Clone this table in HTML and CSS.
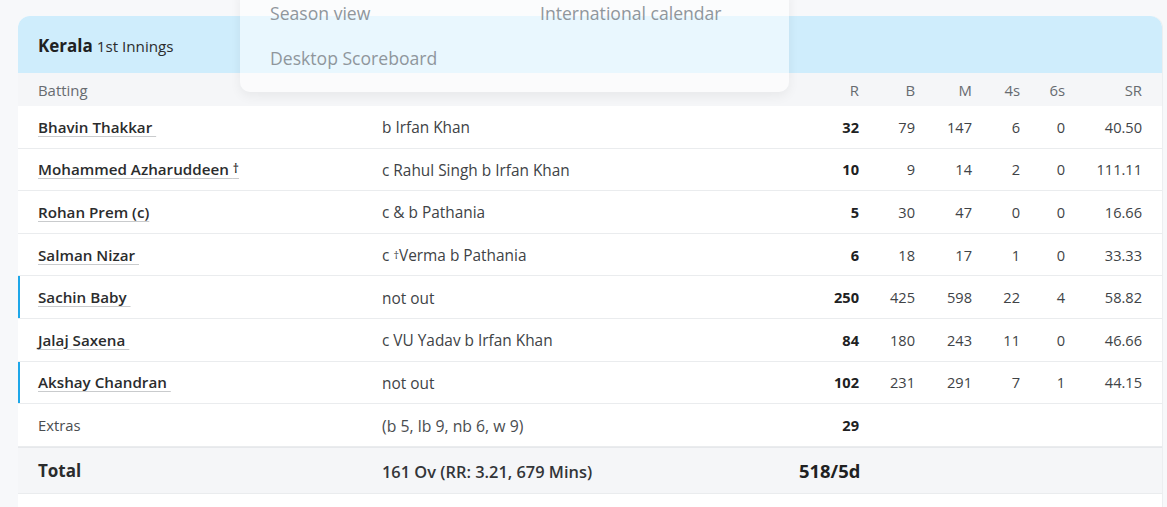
FILE: index.html
```html
<!DOCTYPE html>
<html>
<head>
<meta charset="utf-8">
<link rel="stylesheet" href="styles.css">
</head>
<body>
<div class="page">
  <div class="card">
    <div class="card-head"><span class="team">Kerala</span> <span class="inn">1st Innings</span></div>
    <div class="row head-row">
      <div class="c-name">Batting</div>
      <div class="c-dis"></div>
      <div class="num">R</div>
      <div class="num">B</div>
      <div class="num">M</div>
      <div class="num">4s</div>
      <div class="num">6s</div>
      <div class="num">SR</div>
    </div>
    <div class="row">
      <div class="c-name"><a class="player">Bhavin Thakkar&nbsp;</a></div>
      <div class="c-dis">b Irfan Khan</div>
      <div class="num bold">32</div><div class="num">79</div><div class="num">147</div><div class="num">6</div><div class="num">0</div><div class="num">40.50</div>
    </div>
    <div class="row">
      <div class="c-name"><a class="player">Mohammed Azharuddeen <span class="dag">†</span></a></div>
      <div class="c-dis">c Rahul Singh b Irfan Khan</div>
      <div class="num bold">10</div><div class="num">9</div><div class="num">14</div><div class="num">2</div><div class="num">0</div><div class="num">111.11</div>
    </div>
    <div class="row">
      <div class="c-name"><a class="player">Rohan Prem (c)</a></div>
      <div class="c-dis">c &amp; b Pathania</div>
      <div class="num bold">5</div><div class="num">30</div><div class="num">47</div><div class="num">0</div><div class="num">0</div><div class="num">16.66</div>
    </div>
    <div class="row">
      <div class="c-name"><a class="player">Salman Nizar&nbsp;</a></div>
      <div class="c-dis">c <span class="dag2">†</span>Verma b Pathania</div>
      <div class="num bold">6</div><div class="num">18</div><div class="num">17</div><div class="num">1</div><div class="num">0</div><div class="num">33.33</div>
    </div>
    <div class="row notout">
      <div class="c-name"><a class="player">Sachin Baby&nbsp;</a></div>
      <div class="c-dis">not out</div>
      <div class="num bold">250</div><div class="num">425</div><div class="num">598</div><div class="num">22</div><div class="num">4</div><div class="num">58.82</div>
    </div>
    <div class="row">
      <div class="c-name"><a class="player">Jalaj Saxena&nbsp;</a></div>
      <div class="c-dis">c VU Yadav b Irfan Khan</div>
      <div class="num bold">84</div><div class="num">180</div><div class="num">243</div><div class="num">11</div><div class="num">0</div><div class="num">46.66</div>
    </div>
    <div class="row notout">
      <div class="c-name"><a class="player">Akshay Chandran&nbsp;</a></div>
      <div class="c-dis">not out</div>
      <div class="num bold">102</div><div class="num">231</div><div class="num">291</div><div class="num">7</div><div class="num">1</div><div class="num">44.15</div>
    </div>
    <div class="row extras">
      <div class="c-name">Extras</div>
      <div class="c-dis">(b 5, lb 9, nb 6, w 9)</div>
      <div class="num bold">29</div>
    </div>
    <div class="row total">
      <div class="c-name">Total</div>
      <div class="c-dis">161 Ov (RR: 3.21, 679 Mins)</div>
      <div class="num">518/5d</div>
    </div>
    <div class="row empty"></div>
  </div>

  <div class="menu">
    <div class="menu-grid">
      <div class="menu-item">Season view</div>
      <div class="menu-item">International calendar</div>
      <div class="menu-item">Desktop Scoreboard</div>
    </div>
  </div>
</div>
</body>
</html>
```

FILE: styles.css
```css
html, body {
  margin: 0;
  padding: 0;
  background: #f7f8fa;
  font-family: "Open Sans", "Noto Sans", sans-serif;
  color: #2b2c2d;
}

.page {
  position: relative;
  padding: 16px 0 0 18px;
  height: 507px;
  box-sizing: border-box;
  overflow: hidden;
}

.card {
  width: 1144px;
  background: #fff;
  border-radius: 12px 12px 0 0;
  overflow: hidden;
  box-shadow: 1px 0 0 #eceef0;
}

.card-head {
  height: 57px;
  box-sizing: border-box;
  background: #cfedfc;
  padding: 2px 20px 0;
  display: flex;
  align-items: center;
  gap: 4px;
}

.team {
  font-weight: 700;
  font-size: 17px;
  color: #202122;
}

.inn {
  font-size: 15.2px;
  color: #2b2c2d;
}

.row {
  display: grid;
  grid-template-columns: 344px 417px 60px 56px 57px 48px 45px 77px;
  align-items: center;
  padding: 0 20px;
  height: 42.6px;
  box-sizing: border-box;
  border-bottom: 1px solid #eaecee;
  font-size: 14.6px;
  color: #404346;
}

.c-dis {
  font-size: 15.4px;
  padding-top: 2px;
}

.head-row {
  height: 33px;
  background: #f5f6f8;
  border-bottom: none;
  color: #676b70;
  font-size: 14.9px;
  padding-top: 1px;
}

.num { text-align: right; }

.bold { font-weight: 700; color: #202122; }

.player {
  font-weight: 600;
  font-size: 15.2px;
  color: #2b2c2d;
  text-decoration: underline;
  text-decoration-color: #c9cbcd;
  text-decoration-thickness: 1px;
  text-underline-offset: 3px;
}

.dag {
  font-size: 12px;
  vertical-align: 2px;
}

.dag2 {
  font-size: 11px;
  vertical-align: 2px;
}

.notout {
  box-shadow: inset 2px 0 0 #1ea7e9;
}

.extras { color: #4a4d50; }

.extras .c-name { font-size: 14.8px; }

.extras .c-dis { font-size: 15.8px; }

.total {
  height: 47px;
  background: #f5f6f8;
  border-top: 1px solid #e6e8eb;
}

.total .c-name {
  font-weight: 700;
  font-size: 17px;
  color: #2b2c2d;
}

.total .c-dis {
  font-weight: 600;
  font-size: 16.4px;
  color: #333538;
}

.total .num {
  font-weight: 700;
  font-size: 18.4px;
  color: #202122;
}

.empty {
  height: 30px;
  border-bottom: none;
}

.menu {
  position: absolute;
  left: 240px;
  top: -20px;
  width: 549px;
  height: 112px;
  background: rgba(255, 255, 255, 0.55);
  border-radius: 10px;
  box-shadow: 0 4px 12px rgba(0, 0, 0, 0.06);
  box-sizing: border-box;
  padding: 21px 30px 0;
}

.menu-grid {
  display: grid;
  grid-template-columns: 270px 1fr;
  row-gap: 21px;
}

.menu-item {
  font-size: 17.6px;
  line-height: 24px;
  color: #8f969c;
}
```
